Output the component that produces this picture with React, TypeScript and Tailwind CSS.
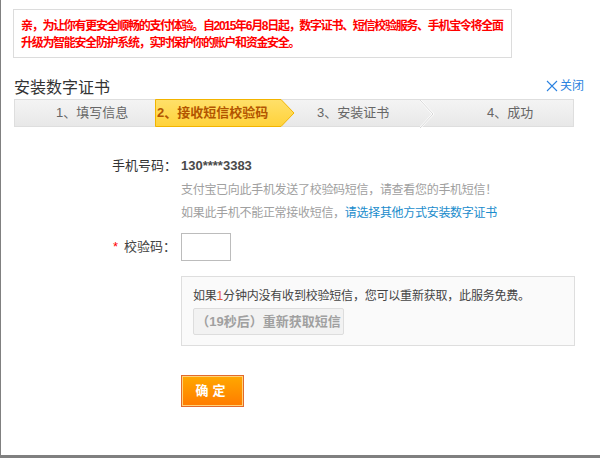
import React from "react";

const font = { fontFamily: '"Liberation Sans", "Noto Sans CJK SC", sans-serif' };

function StepArrow() {
    return (
        <svg className="absolute inset-0" width="140" height="28" viewBox="0 0 140 28">
            <defs>
                <linearGradient id="stepg" x1="0" y1="0" x2="0" y2="1">
                    <stop offset="0" stopColor="#ffe06a" />
                    <stop offset="1" stopColor="#ffd23a" />
                </linearGradient>
            </defs>
            <polygon points="0.5,0.5 126,0.5 139,14 126,27.5 0.5,27.5" fill="url(#stepg)" stroke="#f2b400" />
        </svg>
    );
}

function Chevron() {
    return (
        <svg width="14" height="28" viewBox="0 0 14 28" className="shrink-0">
            <polyline points="0,0 13,14 0,28" fill="none" stroke="#fff" strokeWidth="2" />
            <polyline points="0,0 13,14 0,28" fill="none" stroke="#d6d6d6" strokeWidth="1" />
        </svg>
    );
}

export default function App() {
    return (
        <div className="h-[458px] w-[600px] bg-white border-l border-b-[3px] border-[#808080] overflow-hidden" style={font}>
            {/* notice */}
            <div className="ml-[12px] mt-[9px] h-[49px] w-[499px] border border-[#dcdcdc] px-[7px] pt-[8px] text-[12px] font-bold leading-[17px] tracking-[-1.3px] text-[#ff0000]">
                亲，为让你有更安全顺畅的支付体验。自2015年6月8日起，数字证书、短信校验服务、手机宝令将全面升级为智能安全防护系统，实时保护你的账户和资金安全。
            </div>

            {/* title */}
            <div className="mt-[20px] flex items-end justify-between pl-[13px] pr-[16px]">
                <h1 className="text-[16px] leading-[20px] text-[#333]">安装数字证书</h1>
                <a className="flex items-center gap-[2px] text-[12px] leading-[16px] text-[#2b82e0] mb-[4px]">
                    <svg width="12" height="12" viewBox="0 0 12 12">
                        <path d="M1 1 L11 11 M11 1 L1 11" stroke="#2b82e0" strokeWidth="1.1" />
                    </svg>
                    关闭
                </a>
            </div>

            {/* steps */}
            <div className="ml-[13px] mt-[1px] flex h-[28px] w-[560px] border border-[#dedede] bg-gradient-to-b from-[#f4f4f4] to-[#e8e8e8] text-[13px] leading-[26px] text-[#666]">
                <div className="w-[140px] pl-[41px]">1、填写信息</div>
                <div className="relative -my-px w-[140px] shrink-0">
                    <StepArrow />
                    <span className="relative block pl-[2px] leading-[28px] font-bold text-[#b35500]">2、接收短信校验码</span>
                </div>
                <div className="w-[125px] shrink-0 pl-[22px]">3、安装证书</div>
                <Chevron />
                <div className="flex-1 pl-[53px]">4、成功</div>
            </div>

            {/* form */}
            <div className="mt-[29px] text-[13px] text-[#333]">
                <div className="flex items-center leading-[20px]">
                    <span className="w-[180px] pl-[111px]">手机号码：</span>
                    <span className="font-bold text-[#4a4a4a]">130****3383</span>
                </div>
                <div className="pl-[180px] mt-[3px] text-[12px] leading-[23px] tracking-[-0.3px] text-[#a0a0a0]">
                    <p>支付宝已向此手机发送了校验码短信，请查看您的手机短信！</p>
                    <p>
                        如果此手机不能正常接收短信，<a className="text-[#1a8ccc]">请选择其他方式安装数字证书</a>
                    </p>
                </div>

                <div className="mt-[8px] flex items-center">
                    <span className="w-[180px] pl-[112px] flex items-center text-[13px] text-[#444]">
                        <span className="mr-[6px] text-[#ff0000]">*</span>
                        校验码：
                    </span>
                    <input className="h-[28px] w-[50px] border border-[#bcbcbc] bg-white outline-none" />
                </div>

                <div className="ml-[180px] mt-[15px] h-[70px] w-[394px] border border-[#dedede] bg-[#fafafa] px-[11px] pt-[11px]">
                    <p className="text-[12px] leading-[16px] tracking-[-0.2px] text-[#444]">
                        如果<span className="text-[#e45b3a]">1</span>分钟内没有收到校验短信，您可以重新获取，此服务免费。
                    </p>
                    <button className="mt-[4px] h-[27px] w-[151px] rounded-[2px] border border-[#dddddd] bg-[#f2f2f2] text-[13px] font-bold text-[#a0a0a0]">
                        （19秒后）重新获取短信
                    </button>
                </div>

                <button className="ml-[180px] mt-[29px] h-[32px] w-[63px] border border-[#e26a2c] bg-gradient-to-b from-[#ffa800] to-[#ff7b00] p-0">
                    <span className="flex h-full w-full items-center justify-center border border-[#ffd27a] text-[13px] font-bold tracking-[4px] text-white">
                        确定
                    </span>
                </button>
            </div>
        </div>
    );
}
